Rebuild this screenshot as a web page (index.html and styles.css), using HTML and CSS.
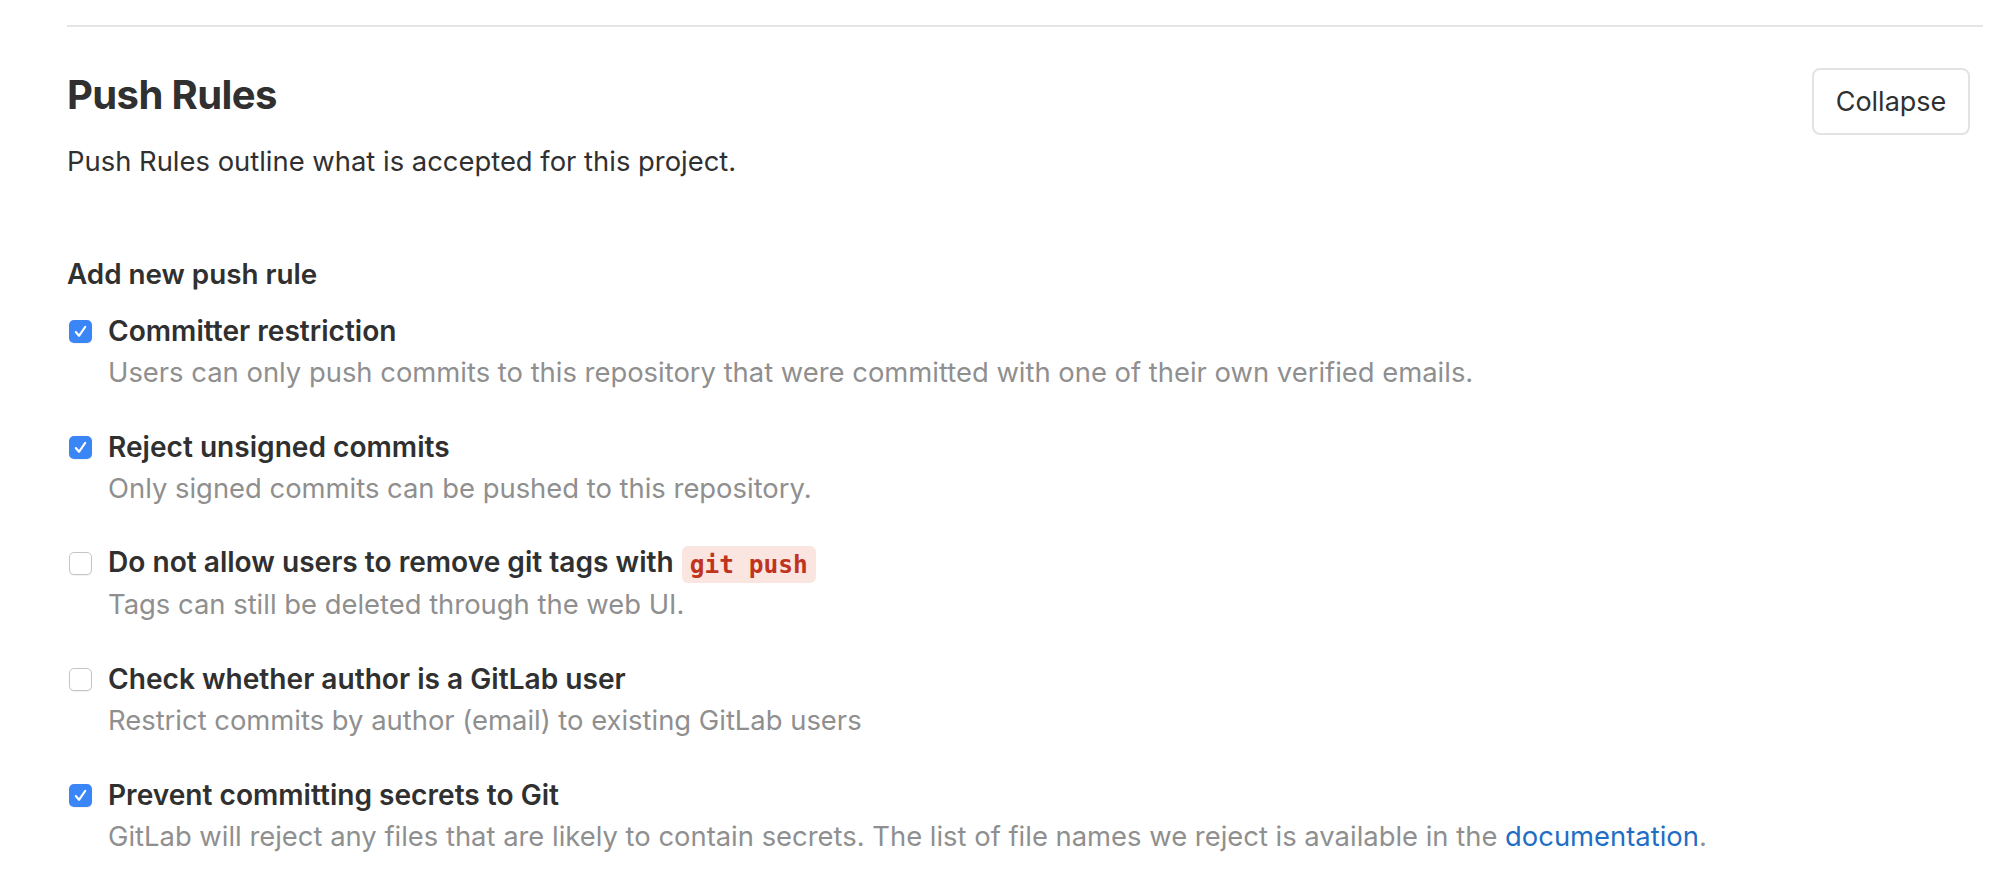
FILE: index.html
```html
<!DOCTYPE html>
<html lang="en">
<head>
<meta charset="utf-8">
<title>Push Rules</title>
<link rel="stylesheet" href="styles.css">
</head>
<body>
<div class="page">
  <hr class="divider">
  <section class="settings-section">
    <div class="section-header">
      <div class="section-intro">
        <h4 class="section-title">Push Rules</h4>
        <p class="section-subtitle">Push Rules outline what is accepted for this project.</p>
      </div>
      <button class="btn-collapse" type="button">Collapse</button>
    </div>

    <div class="rules">
      <h5 class="rules-title">Add new push rule</h5>

      <div class="rule">
        <label class="rule-label">
          <span class="checkbox checked"><svg viewBox="0 0 23 23" width="23" height="23"><path d="M6.8 12 L10 15.8 L16.2 6.8" fill="none" stroke="#fff" stroke-width="2.1" stroke-linecap="round" stroke-linejoin="round"/></svg></span>
          <span class="rule-name">Committer restriction</span>
        </label>
        <p class="rule-help">Users can only push commits to this repository that were committed with one of their own verified emails.</p>
      </div>

      <div class="rule">
        <label class="rule-label">
          <span class="checkbox checked"><svg viewBox="0 0 23 23" width="23" height="23"><path d="M6.8 12 L10 15.8 L16.2 6.8" fill="none" stroke="#fff" stroke-width="2.1" stroke-linecap="round" stroke-linejoin="round"/></svg></span>
          <span class="rule-name">Reject unsigned commits</span>
        </label>
        <p class="rule-help">Only signed commits can be pushed to this repository.</p>
      </div>

      <div class="rule">
        <label class="rule-label">
          <span class="checkbox"></span>
          <span class="rule-name">Do not allow users to remove git tags with <code class="code">git push</code></span>
        </label>
        <p class="rule-help">Tags can still be deleted through the web UI.</p>
      </div>

      <div class="rule">
        <label class="rule-label">
          <span class="checkbox"></span>
          <span class="rule-name">Check whether author is a GitLab user</span>
        </label>
        <p class="rule-help">Restrict commits by author (email) to existing GitLab users</p>
      </div>

      <div class="rule">
        <label class="rule-label">
          <span class="checkbox checked"><svg viewBox="0 0 23 23" width="23" height="23"><path d="M6.8 12 L10 15.8 L16.2 6.8" fill="none" stroke="#fff" stroke-width="2.1" stroke-linecap="round" stroke-linejoin="round"/></svg></span>
          <span class="rule-name">Prevent committing secrets to Git</span>
        </label>
        <p class="rule-help">GitLab will reject any files that are likely to contain secrets. The list of file names we reject is available in the <a class="link" href="#">documentation</a>.</p>
      </div>
    </div>
  </section>
</div>
</body>
</html>
```

FILE: styles.css
```css
* { box-sizing: border-box; }

html, body {
  margin: 0;
  padding: 0;
  background: #ffffff;
}

body {
  font-family: Inter, Roboto, "Liberation Sans", Arial, sans-serif;
  color: #303030;
}

.page {
  padding: 25px 27px 0 67px;
}

.divider {
  margin: 0;
  border: 0;
  border-top: 2px solid #e5e5e5;
}

.section-header {
  display: flex;
  justify-content: space-between;
  align-items: flex-start;
  padding-top: 41px;
  padding-right: 13px;
}

.section-title {
  margin: 3px 0 0 0;
  font-size: 40px;
  line-height: 48px;
  font-weight: 700;
  letter-spacing: -0.6px;
  color: #303030;
}

.section-subtitle {
  margin: 22px 0 0 0;
  font-size: 27.4px;
  line-height: 40px;
  color: #303030;
}

.btn-collapse {
  width: 158px;
  height: 67px;
  margin: 0;
  padding: 0;
  background: #ffffff;
  border: 2px solid #e3e3e3;
  border-radius: 8px;
  font-family: Inter, Roboto, "Liberation Sans", Arial, sans-serif;
  font-size: 27px;
  color: #303030;
}

.rules {
  padding-top: 75px;
}

.rules-title {
  margin: 0 0 20px 0;
  font-size: 27.8px;
  line-height: 36px;
  font-weight: 600;
  color: #303030;
}

.rule {
  margin-bottom: 34px;
}

.rule-label {
  display: flex;
  align-items: center;
  height: 38px;
}

.checkbox {
  flex: none;
  width: 23px;
  height: 23px;
  margin-left: 2px;
  margin-right: 16px;
  border: 1.5px solid #c4c4c4;
  border-radius: 5px;
  background: #ffffff;
  box-shadow: 0 1px 1px rgba(0, 0, 0, 0.06);
  display: flex;
}

.checkbox.checked {
  border: 0;
  background: #3b86f7;
}

.checkbox svg { display: block; }

.rule-name {
  font-size: 28.1px;
  line-height: 38px;
  font-weight: 600;
  color: #303030;
}

.code {
  display: inline-block;
  margin-left: 1px;
  padding: 0 8px;
  line-height: 37px;
  border-radius: 6px;
  background: #fbe5e1;
  color: #c0341d;
  font-family: "DejaVu Sans Mono", "Liberation Mono", monospace;
  font-size: 24.5px;
  font-weight: 700;
  vertical-align: middle;
}

.rule-help {
  margin: 0;
  padding-left: 41px;
  font-size: 27.4px;
  line-height: 44px;
  color: #8f8f8f;
}

.link {
  color: #1f6ec4;
  text-decoration: none;
}
```
